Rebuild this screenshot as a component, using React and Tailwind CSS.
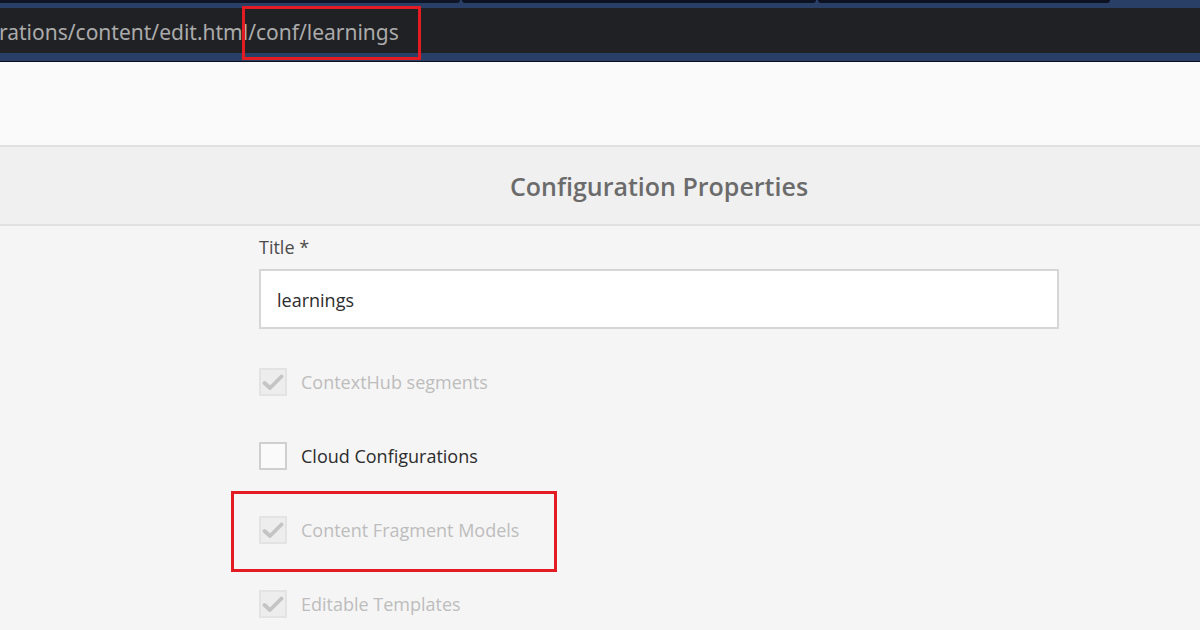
import React from 'react';

const font = { fontFamily: '"Open Sans", "Noto Sans", sans-serif' };

const Check = ({ checked, disabled }) => (
  <div
    className={
      'flex h-[28px] w-[28px] items-center justify-center border-2 ' +
      (disabled ? 'border-[#e3e3e3] bg-[#ededed]' : 'border-[#cfcfcf] bg-[#fafafa]')
    }
  >
    {checked && (
      <svg width="22" height="17" viewBox="0 0 22 17">
        <path d="M2.5 9 L8 14 L19.5 2.5" fill="none" stroke="#c4c4c4" strokeWidth="3.8" strokeLinecap="round" strokeLinejoin="round" />
      </svg>
    )}
  </div>
);

const Row = ({ label, checked, disabled, highlight }) => (
  <div className="relative flex h-[74px] items-center gap-[14px]">
    <Check checked={checked} disabled={disabled} />
    <span className={'text-[18px] ' + (disabled ? 'text-[#bdbdbd]' : 'text-[#2c2c2c]')}>{label}</span>
    {highlight && (
      <div className="pointer-events-none absolute left-[-28px] top-[-2px] h-[81px] w-[326px] border-[3px] border-[#e31b23]" />
    )}
  </div>
);

export default function App() {
  return (
    <div className="relative h-[630px] w-[1200px] overflow-hidden bg-[#f5f5f5]" style={font}>
      {/* browser tabs strip */}
      <div className="flex h-[8px] bg-[#2a3f66]">
        <div className="h-[3px] w-[460px] rounded-br-[4px] bg-[#0f1526]" />
        <div className="ml-[2px] h-[3px] w-[354px] rounded-b-[4px] bg-[#0c1222]" />
        <div className="ml-[2px] h-[3px] w-[292px] rounded-b-[6px] bg-[#0c1222]" />
      </div>

      {/* address bar */}
      <div className="relative flex h-[45px] items-center bg-[#202124]">
        <span className="ml-[-1px] mt-[4px] text-[21px] leading-none text-[#ababab]" style={{ fontFamily: '"Noto Sans", "Open Sans", sans-serif' }}>
          rations/content/edit.html/conf/learnings
        </span>
        <div className="pointer-events-none absolute left-[242px] top-[-2px] h-[54px] w-[179px] border-[3px] border-[#e31b23]" />
      </div>
      <div className="h-[8px] bg-[#2a3f66]" />
      <div className="h-[1px] bg-[#0b1020]" />

      {/* toolbar */}
      <div className="h-[85px] border-b-2 border-[#e1e1e1] bg-[#fafafa]" />

      {/* header */}
      <div className="flex h-[79px] items-center justify-center border-b-2 border-[#e1e1e1] bg-[#f0f0f0] pt-[3px]">
        <h1 className="ml-[118px] text-[25px] font-semibold text-[#6b6b6b]">Configuration Properties</h1>
      </div>

      {/* form */}
      <div className="ml-[259px] w-[800px] pt-[8px]">
        <label className="block text-[18px] leading-[26px] text-[#4b4b4b]">Title *</label>
        <div className="mt-[9px] flex h-[60px] items-center border-2 border-[#d6d6d6] bg-white px-[16px] pt-[2px]">
          <span className="text-[18px] text-[#2c2c2c]">learnings</span>
        </div>
        <div className="mt-[16px]">
          <Row label="ContextHub segments" checked disabled />
          <Row label="Cloud Configurations" />
          <Row label="Content Fragment Models" checked disabled highlight />
          <Row label="Editable Templates" checked disabled />
        </div>
      </div>
    </div>
  );
}
